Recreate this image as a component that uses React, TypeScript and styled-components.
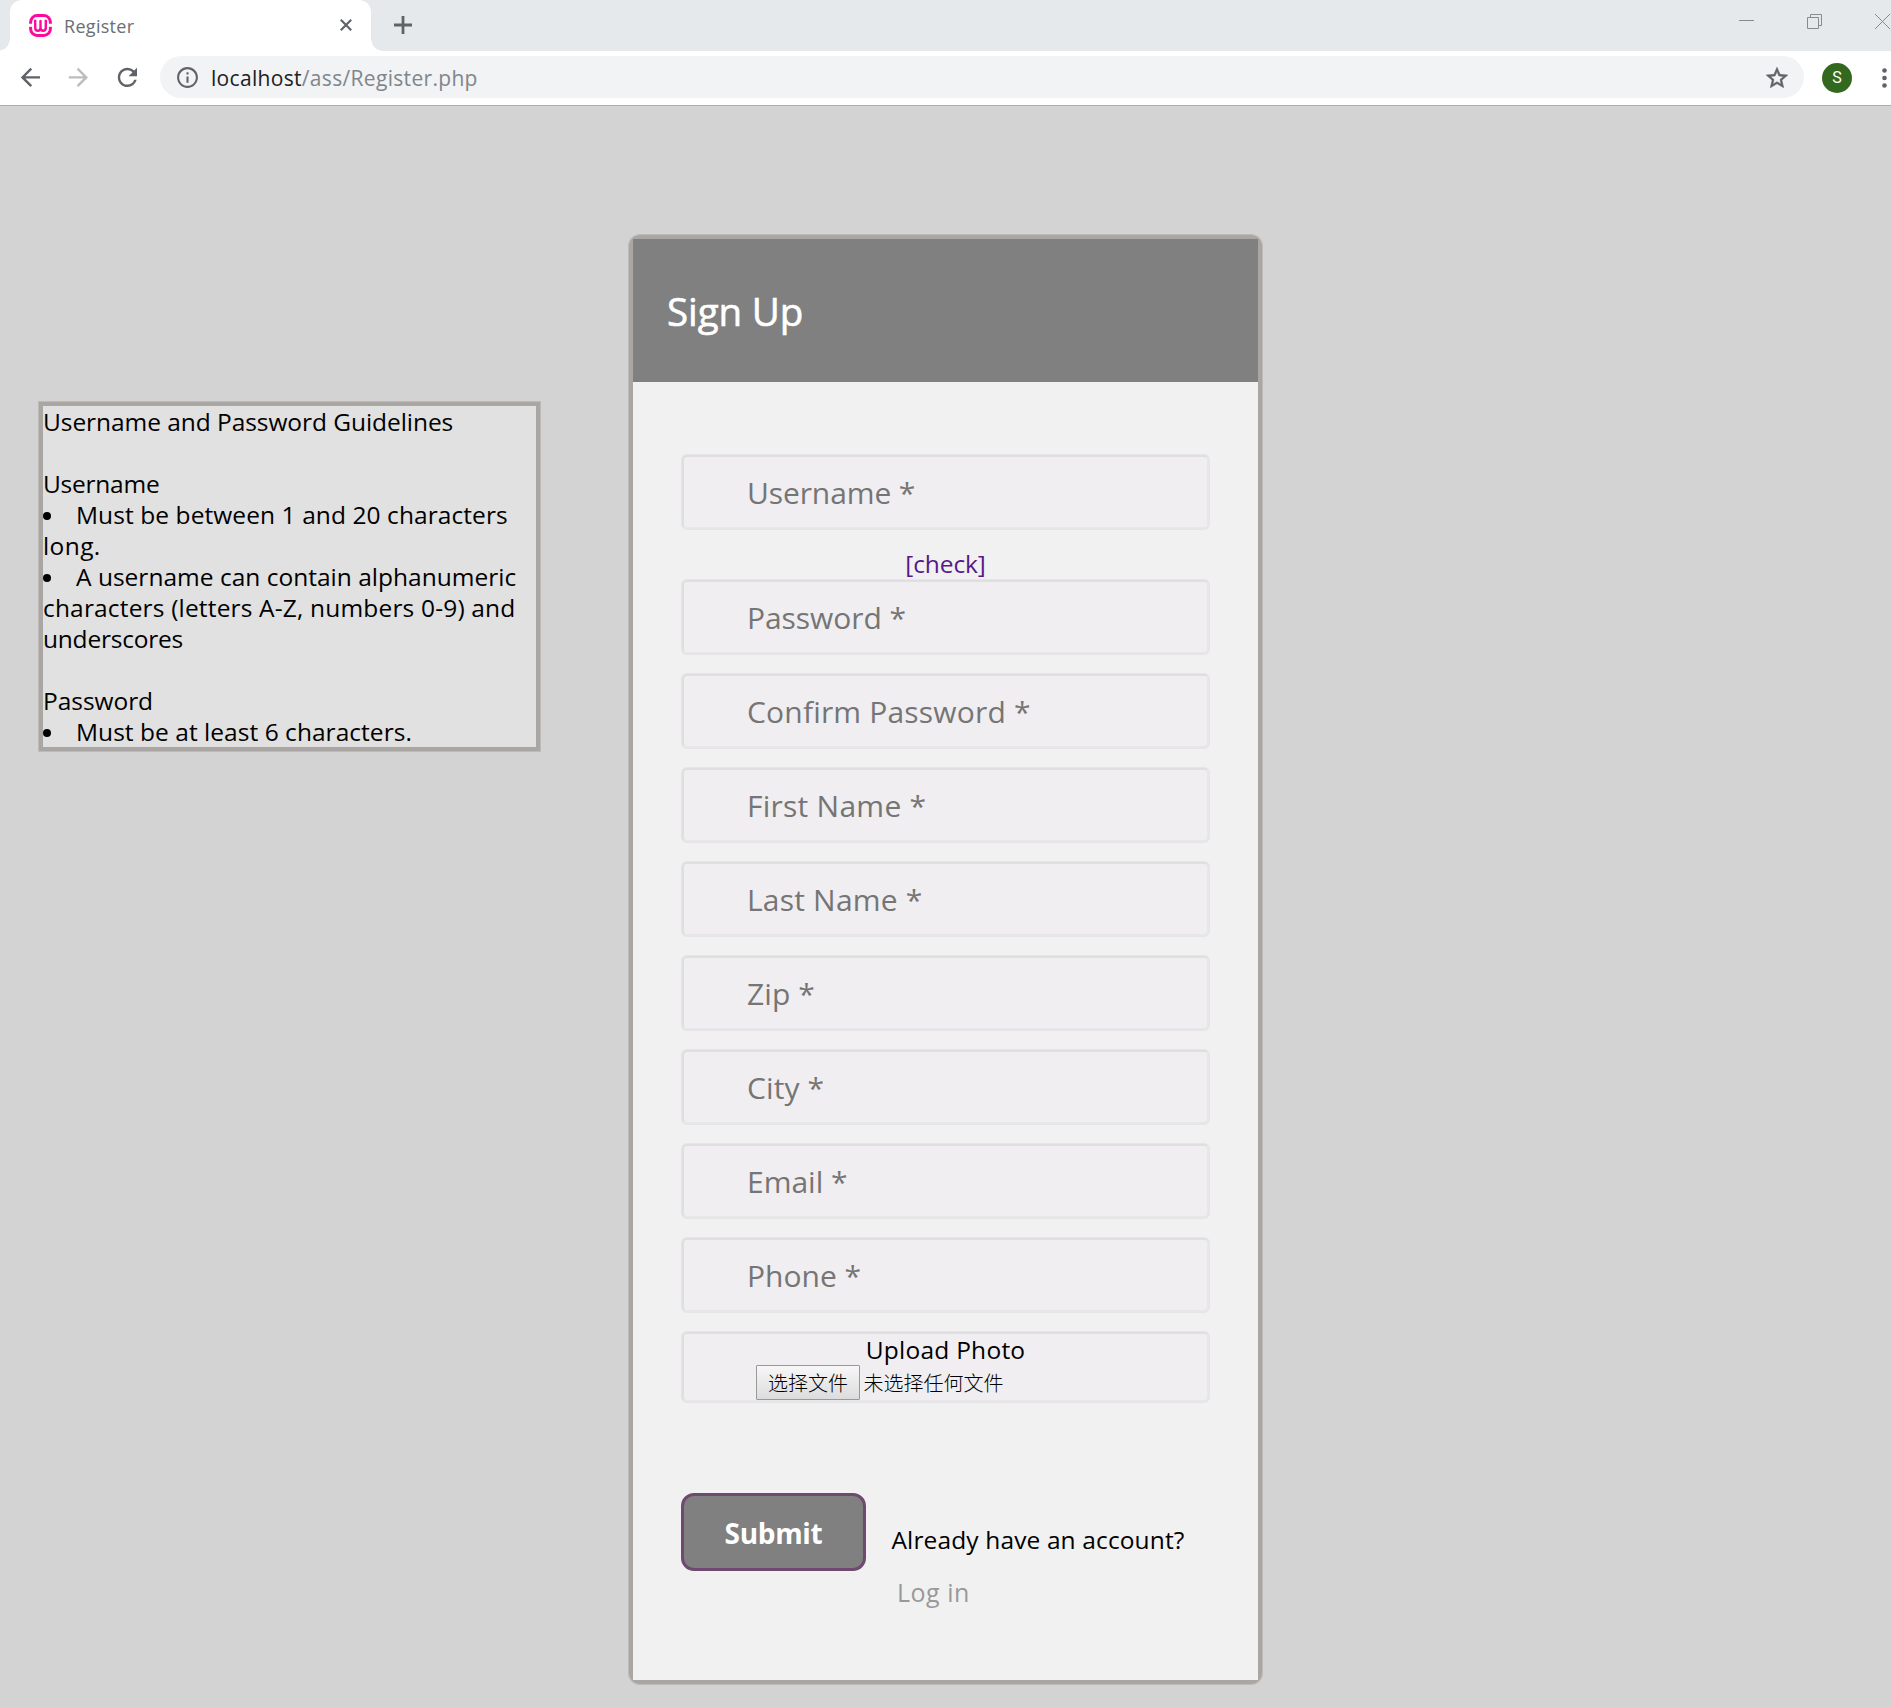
import React from "react";
import styled, { createGlobalStyle } from "styled-components";
import {
  MdArrowBack,
  MdArrowForward,
  MdRefresh,
  MdInfoOutline,
  MdStarOutline,
} from "react-icons/md";

const GlobalStyle = createGlobalStyle`
  *, *::before, *::after { box-sizing: border-box; }
  body {
    margin: 0;
    overflow: hidden;
    background: #d3d3d3;
    color: #000;
    font-family: "Open Sans", "Noto Sans", "Noto Sans CJK SC", sans-serif;
  }
`;

/* ---------- Browser window ---------- */

const Window = styled.div`
  width: 1891px;
  height: 1707px;
  display: flex;
  flex-direction: column;
  overflow: hidden;
`;

const TabStrip = styled.div`
  height: 51px;
  flex: none;
  display: flex;
  align-items: flex-start;
  background: #e5e9ec;
  padding-left: 10px;
`;

const Tab = styled.div`
  position: relative;
  width: 361px;
  height: 51px;
  display: flex;
  align-items: center;
  padding: 0 19px 1px 19px;
  background: #fff;
  border-radius: 12px 12px 0 0;

  &::before,
  &::after {
    content: "";
    position: absolute;
    bottom: 0;
    width: 12px;
    height: 12px;
  }
  &::before {
    left: -12px;
    background: radial-gradient(circle at 0 0, transparent 11.5px, #fff 12px);
  }
  &::after {
    right: -12px;
    background: radial-gradient(circle at 100% 0, transparent 11.5px, #fff 12px);
  }
`;

const TabTitle = styled.span`
  flex: 1;
  padding: 2px 0 0 12px;
  font-size: 18px;
  line-height: 24px;
  letter-spacing: 0.3px;
  color: #6b6e72;
`;

const NewTab = styled.div`
  margin: 16px 0 0 23px;
  height: 18px;
  display: flex;
`;

const WindowControls = styled.div`
  margin: 14px 0 0 auto;
  display: flex;
  align-items: flex-start;
  gap: 53px;
  padding-right: 1px;
`;

const Toolbar = styled.div`
  height: 55px;
  flex: none;
  display: flex;
  align-items: center;
  padding: 0 4px 1px 16px;
  background: #fff;
  border-bottom: 1px solid #adadad;
`;

const NavIcons = styled.div`
  display: flex;
  gap: 19.5px;
`;

const NavIcon = styled.span<{ $disabled?: boolean }>`
  display: flex;
  color: ${(p) => (p.$disabled ? "#bbbdbe" : "#5f6368")};
`;

const AddressBar = styled.div`
  width: 1644px;
  height: 42px;
  margin: 0 0 1px 18.6px;
  display: flex;
  align-items: center;
  padding: 1px 14px 0 15px;
  border-radius: 21px;
  background: #f1f3f4;
  color: #5f6368;
`;

const Url = styled.span`
  flex: 1;
  padding-left: 11px;
  font-size: 21px;
  line-height: 30px;
  letter-spacing: 0.32px;
  color: #80868b;
`;

const Host = styled.span`
  color: #202124;
`;

const StarIcon = styled(MdStarOutline)`
  stroke: currentColor;
  stroke-width: 0.5px;
`;

const Avatar = styled.div`
  width: 30px;
  height: 30px;
  margin: 1px 30px 0 18px;
  display: flex;
  align-items: center;
  justify-content: center;
  border-radius: 50%;
  background: #33691e;
  color: #fff;
  font: 16px/30px Roboto, sans-serif;
`;

/* ---------- Page ---------- */

const Page = styled.main`
  flex: 1;
  display: flex;
  align-items: flex-start;
  padding-left: 39px;
  background: #d3d3d3;
`;

const Guidelines = styled.aside`
  width: 501px;
  margin-top: 296px;
  flex: none;
  border: 4px solid #aaa6a3;
  box-shadow: 0 0 0 1px #bdbab8;
  background: #e1e1e1;
`;

const Line = styled.div<{ $spacing?: number; $bullet?: boolean }>`
  height: 31px;
  display: flex;
  align-items: center;
  white-space: pre;
  font-size: 24.5px;
  line-height: 31px;
  letter-spacing: ${(p) => p.$spacing ?? 0}px;

  &::before {
    content: "";
    display: ${(p) => (p.$bullet ? "block" : "none")};
    width: 8px;
    height: 8px;
    margin: 3px 25px 0 0;
    border-radius: 50%;
    background: #000;
  }
`;

const Card = styled.section`
  width: 633px;
  margin: 129px 0 0 89px;
  flex: none;
  border: 4px solid #aaa6a3;
  border-radius: 11px;
  box-shadow: 0 0 0 1px #bdbbba;
`;

const CardHeader = styled.header`
  height: 143px;
  display: flex;
  align-items: center;
  padding-left: 34px;
  background: #808080;
  color: #fff;
  font-size: 38.5px;
  letter-spacing: -0.1px;
  -webkit-text-stroke: 0.6px #fff;
`;

const Form = styled.form`
  height: 1298px;
  padding: 73px 49px 0;
  background: #f1f1f1;
`;

const Field = styled.input<{ $spacing?: number }>`
  display: block;
  width: 527px;
  height: 74px;
  margin: 0 0 20px;
  padding: 0 0 0 63px;
  border: 2px solid;
  border-color: #e0dee1 #e8e6e9 #e8e6e9 #e0dee1;
  border-radius: 5px;
  box-shadow: 0 0 0 1px #e5e4e6;
  background: #f0eef1;
  font: 30px "Open Sans", "Noto Sans", sans-serif;
  letter-spacing: ${(p) => p.$spacing ?? 0.12}px;
  outline: none;

  &::placeholder {
    color: #757575;
    opacity: 1;
  }
`;

const CheckLink = styled.a`
  display: block;
  height: 31px;
  margin: -1px 0 1px;
  text-align: center;
  font-size: 24.5px;
  line-height: 31px;
  letter-spacing: -0.1px;
  color: #551a8b;
`;

const Upload = styled.div`
  width: 527px;
  height: 70px;
  border: 2px solid;
  border-color: #e0dee1 #e8e6e9 #e8e6e9 #e0dee1;
  border-radius: 5px;
  box-shadow: 0 0 0 1px #e5e4e6;
  background: #f0eef1;
`;

const UploadLabel = styled.div`
  height: 31px;
  text-align: center;
  font-size: 24.5px;
  line-height: 31px;
  letter-spacing: 0.25px;
`;

const FileRow = styled.div`
  display: flex;
  align-items: center;
  padding-left: 72px;
  gap: 3.5px;
  font: 300 20px/33px "Noto Sans CJK SC", sans-serif;
`;

const FileButton = styled.button`
  width: 104px;
  height: 35px;
  padding: 0;
  border: 1px solid #999;
  border-radius: 1px;
  background: linear-gradient(#f7f7f7, #dcdcdc);
  color: #000;
  font: inherit;
`;

const Actions = styled.div`
  display: flex;
  align-items: flex-start;
  margin: 91px 0 0 -1px;
`;

const Submit = styled.button`
  width: 185px;
  height: 78px;
  padding: 1px 0 0;
  border: 3px solid #6f4a70;
  border-radius: 13px;
  background: #808080;
  color: #fff;
  font: bold 28px "Open Sans", "Noto Sans", sans-serif;
  letter-spacing: -0.3px;
`;

const LoginPrompt = styled.div`
  padding: 31px 0 0 25.500px;
  display: flex;
  flex-direction: column;
  gap: 22px;
`;

const LoginLink = styled.a`
  padding-left: 5.500px;
  font-size: 25px;
  line-height: 31px;
  letter-spacing: 0.5px;
  color: #999;
`;

const Favicon = () => (
  <svg width="23" height="23" viewBox="0 0 23 23" fill="none" stroke="#ff0a9b">
    <path
      strokeWidth="3"
      d="M1.600 9.800V8.200a6.600 6.600 0 0 1 6.600-6.600h6.600a6.600 6.600 0 0 1 6.600 6.600v1.600M1.600 12.800v2a6.600 6.600 0 0 0 6.600 6.600h6.600a6.600 6.600 0 0 0 6.600-6.600v-2"
    />
    <path
      strokeWidth="2.400"
      strokeLinejoin="round"
      d="M6.200 5.800v8c0 2 1 3 2.600 3 1.600 0 2.700-1 2.700-3V7v6.800c0 2 1.100 3 2.700 3 1.700 0 2.600-1 2.600-3v-8"
    />
    <path strokeWidth="2" d="M0 11.300h3.500M19.500 11.300H23" stroke="#fff" />
  </svg>
);

const fields = [
  { label: "Password *", spacing: -0.05 },
  { label: "Confirm Password *", spacing: 0.18 },
  { label: "First Name *", spacing: 0.25 },
  { label: "Last Name *", spacing: 0.2 },
  { label: "Zip *" },
  { label: "City *" },
  { label: "Email *", spacing: 0 },
  { label: "Phone *", spacing: 0 },
];

export default function App() {
  return (
    <Window>
      <GlobalStyle />
      <TabStrip>
        <Tab>
          <Favicon />
          <TabTitle>Register</TabTitle>
          <svg width="12" height="12" viewBox="0 0 12 12" stroke="#5f6368" strokeWidth="2.200">
            <path d="M.8.8l10.400 10.400M11.200.8L.8 11.200" />
          </svg>
        </Tab>
        <NewTab>
          <svg width="18" height="18" viewBox="0 0 18 18" stroke="#5f6368" strokeWidth="2.800">
            <path d="M9 0v18M0 9h18" />
          </svg>
        </NewTab>
        <WindowControls>
          <svg width="15" height="15" viewBox="0 0 15 15" stroke="#888b8d">
            <path d="M0 6.500h15" />
          </svg>
          <svg width="15" height="15" viewBox="0 0 15 15" fill="none" stroke="#888b8d">
            <path d="M.5 3.500h11v11H.5zM3.500 3.500v-3h11v11h-3" />
          </svg>
          <svg width="15" height="15" viewBox="0 0 15 15" stroke="#888b8d">
            <path d="M0 0l15 15M15 0L0 15" />
          </svg>
        </WindowControls>
      </TabStrip>
      <Toolbar>
        <NavIcons>
          <NavIcon><MdArrowBack size={28.8} /></NavIcon>
          <NavIcon $disabled><MdArrowForward size={28.8} /></NavIcon>
          <NavIcon><MdRefresh size={28.8} /></NavIcon>
        </NavIcons>
        <AddressBar>
          <MdInfoOutline size={25} />
          <Url><Host>localhost</Host>/ass/Register.php</Url>
          <StarIcon size={26} />
        </AddressBar>
        <Avatar>S</Avatar>
        <svg width="5" height="20" viewBox="0 0 5 20" fill="#5f6368">
          <circle cx="2.500" cy="2.500" r="2.300" />
          <circle cx="2.500" cy="10" r="2.300" />
          <circle cx="2.500" cy="17.500" r="2.300" />
        </svg>
      </Toolbar>
      <Page>
        <Guidelines>
          <Line $spacing={-0.06}>Username and Password Guidelines</Line>
          <Line />
          <Line $spacing={-0.25}>Username</Line>
          <Line $bullet $spacing={0.08}>Must be between 1 and 20 characters</Line>
          <Line $spacing={0.4}>long.</Line>
          <Line $bullet $spacing={0.01}>A username can contain alphanumeric</Line>
          <Line $spacing={0.17}>characters (letters A-Z, numbers 0-9) and</Line>
          <Line $spacing={-0.22}>underscores</Line>
          <Line />
          <Line $spacing={-0.05}>Password</Line>
          <Line $bullet $spacing={0.04}>Must be at least 6 characters.</Line>
        </Guidelines>
        <Card>
          <CardHeader>Sign Up</CardHeader>
          <Form onSubmit={(e) => e.preventDefault()}>
            <Field placeholder="Username *" $spacing={-0.1} />
            <CheckLink>[check]</CheckLink>
            {fields.map((f) => (
              <Field key={f.label} placeholder={f.label} $spacing={f.spacing} />
            ))}
            <Upload>
              <UploadLabel>Upload Photo</UploadLabel>
              <FileRow>
                <FileButton type="button">选择文件</FileButton>
                <span>未选择任何文件</span>
              </FileRow>
            </Upload>
            <Actions>
              <Submit>Submit</Submit>
              <LoginPrompt>
                <Line $spacing={0.13}>Already have an account?</Line>
                <LoginLink>Log in</LoginLink>
              </LoginPrompt>
            </Actions>
          </Form>
        </Card>
      </Page>
    </Window>
  );
}
